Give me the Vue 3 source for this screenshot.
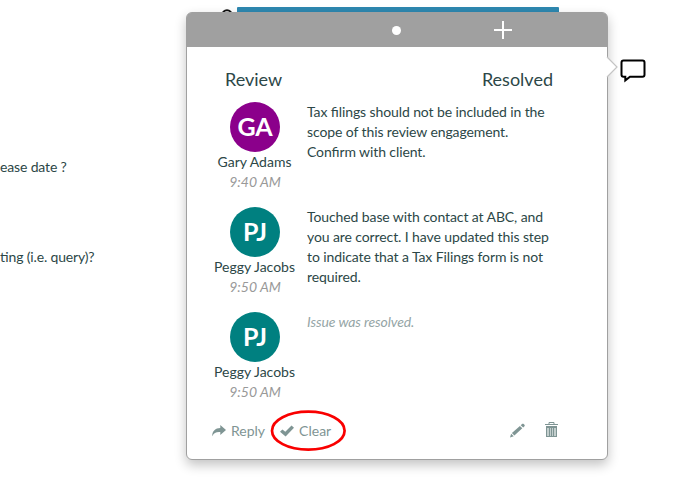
<script setup>
const messages = [
  {
    initials: 'GA', name: 'Gary Adams', time: '9:40 AM', tone: 'purple',
    lines: ['Tax filings should not be included in the', 'scope of this review engagement.', 'Confirm with client.'],
  },
  {
    initials: 'PJ', name: 'Peggy Jacobs', time: '9:50 AM', tone: 'teal',
    lines: ['Touched base with contact at ABC, and', 'you are correct. I have updated this step', 'to indicate that a Tax Filings form is not', 'required.'],
  },
  { initials: 'PJ', name: 'Peggy Jacobs', time: '9:50 AM', tone: 'teal', muted: true, lines: ['Issue was resolved.'] },
]
</script>

<template>
  <main class="page">
    <div class="strip">
      <svg class="ring" width="12" height="12" viewBox="0 0 12 12"><circle cx="6" cy="6" r="4.8" fill="none" stroke="#111" stroke-width="2" /></svg>
      <div class="bar"></div>
    </div>
    <div class="questions">
      <p>ease date ?</p>
      <p class="second">ting (i.e. query)?</p>
    </div>

    <section class="popover">
      <header class="head">
        <span class="dot"></span>
        <svg class="plus" width="18" height="18" viewBox="0 0 18 18"><path d="M9 0V18M0 9H18" stroke="#fff" stroke-width="2" /></svg>
      </header>
      <div class="titles"><span>Review</span><span>Resolved</span></div>
      <div class="messages">
        <article v-for="(m, i) in messages" :key="i" class="message">
          <div class="person">
            <div class="avatar" :class="m.tone">{{ m.initials }}</div>
            <div>{{ m.name }}</div>
            <div class="time">{{ m.time }}</div>
          </div>
          <div class="body" :class="{ muted: m.muted }">
            <div v-for="l in m.lines" :key="l">{{ l }}</div>
          </div>
        </article>
      </div>
      <footer class="actions">
        <svg class="reply" width="14" height="12" viewBox="0 0 14 12"><path d="M8.3 0L14 5L8.3 10V7.1C4.2 6.8 1.8 8 .3 11.2C-.1 6.3 3 3.1 8.3 2.9Z" fill="#7f9594" /></svg>
        <span class="label">Reply</span>
        <svg class="check" width="14" height="12" viewBox="0 0 14 12"><path d="M0 6.7L2.4 4.4L5.3 6.7L11.5 .4L14 2.8L5.6 11.6Z" fill="#7f9594" /></svg>
        <span class="label">Clear</span>
        <svg class="pencil" width="15" height="15" viewBox="0 0 15 15"><path d="M0 14.5L1.1 10.8L3.8 13.3ZM1.9 10L9.9 3L12.3 5.2L4.4 12.5ZM10.7 2.3L12.3 .7H13.4L14.7 1.9V3L13.2 4.4Z" fill="#7f9594" /></svg>
        <svg class="trash" width="13" height="15" viewBox="0 0 13 15"><path d="M4 2V.5H9V2M0 2.5H13" fill="none" stroke="#7f9594" /><path d="M1 4H12V15H1Z" fill="#c3cecd" /><path d="M1 4H12V6H1ZM1 14H12V15H1ZM1 6H2V14H1ZM4 6H5V14H4ZM6 6H7V14H6ZM8 6H9V14H8ZM11 6H12V14H11Z" fill="#7f9594" /></svg>
      </footer>
      <svg class="arrow" width="12" height="22" viewBox="0 0 12 22"><path d="M0 1L1 1L11 11L1 21L0 21Z" fill="#fff" /><path d="M1 1L11 11L1 21" fill="none" stroke="#c4c4c4" stroke-width="1.2" /></svg>
      <svg class="highlight" width="76" height="42" viewBox="0 0 76 42"><ellipse cx="38.3" cy="20.7" rx="36.3" ry="19" fill="none" stroke="#f90000" stroke-width="2.7" /></svg>
    </section>
    <svg class="comment" width="26" height="24" viewBox="0 0 26 24"><path d="M3.5 1.5H22.5Q24.5 1.5 24.5 3.5V15.8Q24.5 17.8 22.5 17.8H10L5.3 21.4V17.8H3.5Q1.5 17.8 1.5 15.8V3.5Q1.5 1.5 3.5 1.5Z" fill="none" stroke="#000" stroke-width="2" /></svg>
  </main>
</template>

<style>
body { background: #fff; }
</style>

<style scoped>
.page { position: relative; width: 700px; height: 480px; overflow: hidden; box-sizing: border-box; font: 14px/20px Lato, sans-serif; font-feature-settings: "liga" 1; color: #2c4747; }
.strip { display: flex; gap: 4px; padding: 7px 0 0 221px; height: 14px; }
.ring { margin-top: 2px; }
.bar { width: 322px; height: 14px; background: #2e88b0; border-radius: 1px; }
.questions { padding-top: 136px; letter-spacing: -.15px; }
.questions p { margin: 0; }
.questions .second { margin-top: 70px; }
.popover { position: absolute; left: 186px; top: 12px; width: 422px; height: 448px; box-sizing: border-box; border: 1px solid #a0a0a0; border-radius: 6px; background: #fff; box-shadow: 0 5px 12px rgba(0,0,0,.24); }
.head { height: 34px; background: #a0a0a0; border-radius: 4px 4px 0 0; display: flex; align-items: center; }
.dot { width: 9px; height: 9px; border-radius: 50%; background: #fff; margin-left: 205px; }
.plus { margin-left: 93px; }
.titles { display: flex; justify-content: space-between; padding: 20px 54px 0 38px; font-size: 18px; line-height: 24px; }
.messages { display: flex; flex-direction: column; gap: 15px; padding: 11px 0 0 20px; }
.message { display: flex; height: 90px; }
.person { display: flex; flex-direction: column; align-items: center; width: 95px; white-space: nowrap; }
.avatar { box-sizing: border-box; width: 50px; height: 50px; margin-left: 1px; border-radius: 50%; color: #fff; font-size: 25px; font-weight: 700; line-height: 48px; text-align: center; letter-spacing: -.2px; }
.purple { background: #8b008b; }
.teal { background: #008080; }
.time { font-style: italic; color: #999; margin-left: 1px; }
.body { margin-left: 5px; white-space: nowrap; letter-spacing: -.1px; }
.muted { font-style: italic; color: #95a5a6; }
.actions { display: flex; align-items: center; height: 20px; padding: 19px 0 0 25px; color: #7f9594; }
.label { margin-left: 5px; }
.check { margin-left: 15px; }
.pencil { margin: 0 0 2px 179px; }
.trash { margin: 0 0 3px 20px; }
.arrow { position: absolute; left: 419px; top: 43px; }
.highlight { position: absolute; left: 83px; top: 397px; }
.comment { position: absolute; left: 620px; top: 59px; }
</style>
